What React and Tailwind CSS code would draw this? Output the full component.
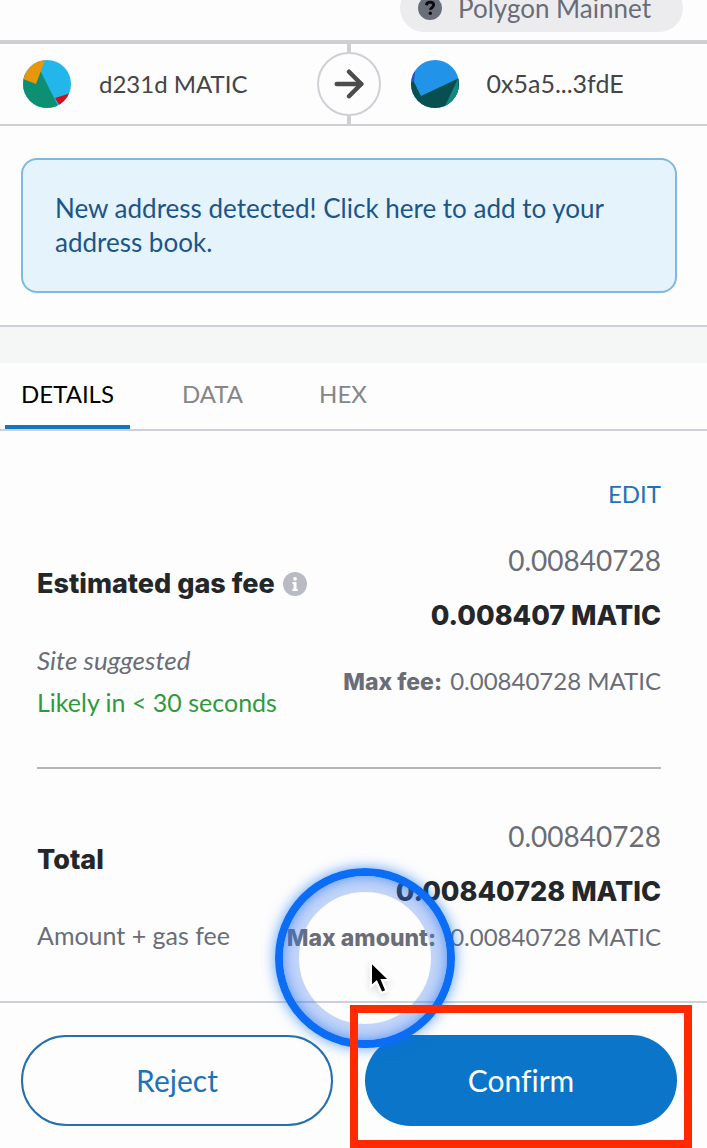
import { ArrowRight } from "lucide-react";

function SenderAvatar() {
  return (
    <svg viewBox="0 0 48 48" className="size-12 shrink-0 rounded-full" aria-hidden="true">
      <rect width="48" height="48" fill="#22b6ea" />
      <path d="M18 12 L36 48 L0 48 L0 14 Z" fill="#0c8f72" />
      <path d="M0 19 L13 24 L22 0 L0 0 Z" fill="#e8960c" />
      <path d="M32 38 L48 33 L48 48 L38 48 Z" fill="#d80c14" />
    </svg>
  );
}

function RecipientAvatar() {
  return (
    <svg viewBox="0 0 48 48" className="size-12 shrink-0 rounded-full" aria-hidden="true">
      <rect width="48" height="48" fill="#2194ea" />
      <path d="M0 10 L4 12 L3 24 L0 26 Z" fill="#2c50c4" />
      <path d="M3 22 L10 36 L48 18 L48 48 L0 48 L0 22 Z" fill="#08504f" />
      <path d="M47 19 L33 48 L48 48 Z" fill="#16897e" />
    </svg>
  );
}

function QuestionIcon() {
  return (
    <svg viewBox="0 0 24 24" className="size-6 shrink-0" aria-hidden="true">
      <circle cx="12" cy="12" r="12" fill="#6a6e78" />
      <path d="M8.400 9.200c.3-2 1.700-3 3.700-3 2.100 0 3.600 1.100 3.600 2.900 0 2.400-3.300 2.500-3.300 4.700" fill="none" stroke="#0b0b0d" strokeWidth="2.800" />
      <circle cx="12.300" cy="17.300" r="1.700" fill="#0b0b0d" />
    </svg>
  );
}

function InfoIcon() {
  return (
    <svg viewBox="0 0 24 24" className="size-6 shrink-0" aria-hidden="true">
      <circle cx="12" cy="12" r="12" fill="#b8bbc3" />
      <circle cx="12" cy="6.800" r="1.900" fill="#fdfdfd" />
      <path d="M9.500 10h4v7h1.200v2H9.500v-2h1v-5h-1z" fill="#fdfdfd" />
    </svg>
  );
}

function Pointer() {
  return (
    <svg viewBox="0 0 22 34" className="absolute top-[84px] left-[86px] h-[38px] w-[25px] overflow-visible drop-shadow-md" aria-hidden="true">
      <path d="M1.500 1.500 V24 L6.500 19.500 L11 29.500 L15.500 27.500 L11.500 18 H18.500 Z" fill="#000" stroke="#fff" strokeWidth="2" />
    </svg>
  );
}

export default function App() {
  return (
    <main className="overflow-hidden bg-[#fdfdfd] font-['Lato',sans-serif] text-2xl text-[#24272a] [font-variant-ligatures:none]">
      <header className="flex h-11 items-end justify-end border-b-4 border-[#cfcfd3] pr-6 pb-2">
        <div className="flex h-12 shrink-0 items-center gap-4 rounded-full bg-[#ececee] pr-8 pl-[18px] text-[#6a6d77]">
          <QuestionIcon />
          <span className="text-[26px] leading-8">Polygon Mainnet</span>
        </div>
      </header>

      <section className="grid h-[82px] grid-cols-[1fr_64px_1fr] border-b-2 border-[#cfcfd3] pr-[10px] text-[#444547]">
        <div className="flex items-center gap-7 pl-[23px]">
          <SenderAvatar />
          <span>d231d MATIC</span>
        </div>
        <div className="flex flex-col items-center">
          <span className="w-1 flex-1 bg-[#cfcfd3]" />
          <span className="flex size-16 items-center justify-center rounded-full border-2 border-[#cfcfd6]">
            <ArrowRight size={42} strokeWidth={2.6} color="#4c4c4c" />
          </span>
          <span className="w-1 flex-1 bg-[#cfcfd3]" />
        </div>
        <div className="flex items-center gap-7 pl-[30px]">
          <RecipientAvatar />
          <span className="text-[25px]">0x5a5...3fdE</span>
        </div>
      </section>

      <section className="border-b-2 border-[#cfcfd8] pt-8 pr-[30px] pb-8 pl-[21px]">
        <button type="button" className="block w-full rounded-2xl border-2 border-[#7fb9df] bg-[#e5f3fc] px-8 pt-[31px] pb-8 text-left text-[26px] leading-[34px] text-[#1c5588]">
          New address detected! Click here to add to your address book.
        </button>
      </section>

      <div className="h-9 bg-[#f5f7f6]" />

      <nav role="tablist" className="flex h-[68px] border-b-2 border-[#cfcfd8] pl-[5px] text-[#848689]">
        <button type="button" role="tab" aria-selected="true" className="mr-9 w-[125px] border-b-4 border-[#1476bd] text-black">DETAILS</button>
        <button type="button" role="tab" aria-selected="false" className="mr-11 w-[93px] border-b-4 border-transparent">DATA</button>
        <button type="button" role="tab" aria-selected="false" className="w-20 border-b-4 border-transparent">HEX</button>
      </nav>

      <div className="pr-[46px] pl-[37px]">
        <div className="flex justify-end pt-[47px]">
          <button type="button" className="h-8 text-[#1c73b5]">EDIT</button>
        </div>

        <section className="flex justify-between border-b-2 border-[#b4b5b8] pt-[23px] pb-11">
          <div className="text-[25px]">
            <h2 className="flex items-center gap-2 pt-[33px] font-['Inter',sans-serif] text-[27px] leading-9 font-extrabold">
              Estimated gas fee
              <InfoIcon />
            </h2>
            <p className="pt-[37px] text-[26px] leading-[42px] text-[#6a6d77] italic">Site suggested</p>
            <p className="leading-[42px] text-[#2f9a3c]">Likely in &lt; 30 seconds</p>
          </div>
          <div className="text-right">
            <p className="text-[28px] leading-[55px] text-[#6a6d77]">0.00840728</p>
            <p className="font-['Inter',sans-serif] text-[27px] leading-[55px] font-extrabold">0.008407 MATIC</p>
            <p className="pt-[10px] leading-[55px] text-[#6a6d77]"><strong className="mr-0.5 font-['Inter',sans-serif] text-[23px] font-extrabold">Max fee:</strong> 0.00840728 MATIC</p>
          </div>
        </section>

        <section className="flex justify-between pt-10 pb-[45px]">
          <div className="text-[25px]">
            <h2 className="pt-[33px] font-['Inter',sans-serif] text-[27px] leading-9 font-extrabold">Total</h2>
            <p className="pt-[39px] leading-9 text-[#6a6d77]">Amount + gas fee</p>
          </div>
          <div className="text-right">
            <p className="text-[28px] leading-[55px] text-[#6a6d77]">0.00840728</p>
            <p className="font-['Inter',sans-serif] text-[27px] leading-[55px] font-extrabold">0.00840728 MATIC</p>
            <p className="leading-9 text-[#6a6d77]"><strong className="mr-2 font-['Inter',sans-serif] text-[23px] font-extrabold">Max amount:</strong> 0.00840728 MATIC</p>
          </div>
        </section>
      </div>

      <footer className="grid grid-cols-2 gap-8 border-t-2 border-[#cdd0d6] pt-8 pr-[30px] pb-[22px] pl-[21px] text-[30px]">
        <button type="button" className="h-[91px] rounded-full border-2 border-[#2470ae] text-[#1c73b5]">Reject</button>
        <div className="relative">
          <button type="button" className="h-[91px] w-full rounded-full bg-[#0b75c9] text-white">Confirm</button>
          <div className="pointer-events-none absolute top-[-167px] left-[-90px] size-[180px] rounded-full border-8 border-[#0b6cf5] shadow-[0_0_14px_#0b6cf5aa,inset_0_0_14px_#0b6cf5aa]">
            <div className="size-full rounded-full border-16 border-[#3c78f04d]" />
            <Pointer />
          </div>
          <div className="pointer-events-none absolute -top-[30px] -right-[15px] -bottom-[22px] -left-[15px] border-8 border-[#ff2a00]" />
        </div>
      </footer>
    </main>
  );
}
